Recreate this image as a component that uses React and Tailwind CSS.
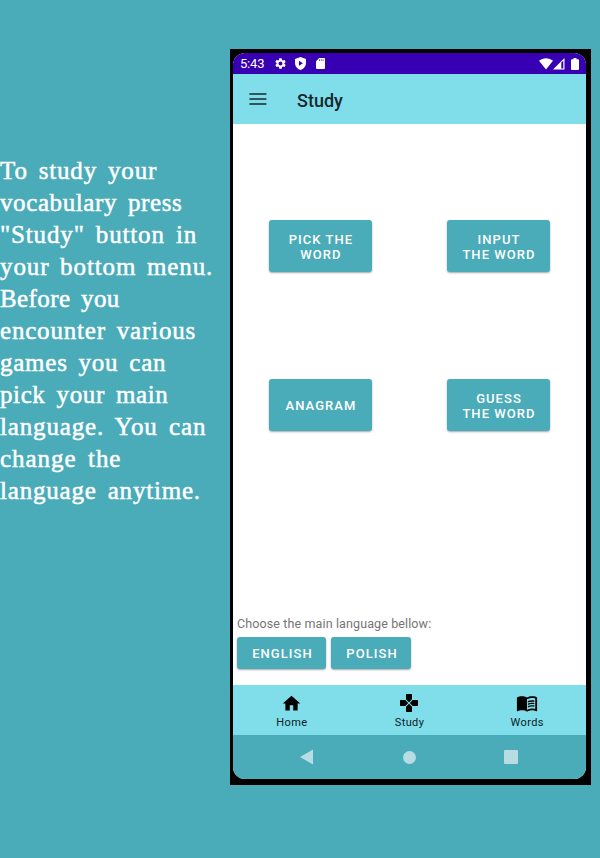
import React from "react";
import { MdSettings, MdHome, MdMenuBook } from "react-icons/md";

const introLines = [
  { text: "To study your", cls: "tracking-[0.85px] [word-spacing:3.8px]" },
  { text: "vocabulary press", cls: "tracking-[0.6px] [word-spacing:4px]" },
  { text: '"Study" button in', cls: "tracking-[0.85px] [word-spacing:4px]" },
  { text: "your bottom menu.", cls: "tracking-[0.9px] [word-spacing:3.500px]" },
  { text: "Before you", cls: "tracking-[0.4px] [word-spacing:4px]" },
  { text: "encounter various", cls: "tracking-[0.8px] [word-spacing:4px]" },
  { text: "games you can", cls: "tracking-[0.75px] [word-spacing:4px]" },
  { text: "pick your main", cls: "tracking-[0.6px] [word-spacing:4.300px]" },
  { text: "language. You can", cls: "tracking-[0.85px] [word-spacing:4.300px]" },
  { text: "change the", cls: "tracking-[0.95px] [word-spacing:4.300px]" },
  { text: "language anytime.", cls: "tracking-[0.8px] [word-spacing:4px]" },
];

function Intro() {
  return (
    <div className="mt-[155px] w-[230px] shrink-0 whitespace-nowrap font-['Liberation_Serif',serif] text-[25px] leading-8 text-white [-webkit-text-stroke:0.5px_white]">
      {introLines.map((l) => (
        <p key={l.text}>
          <span className={l.cls}>{l.text}</span>
        </p>
      ))}
    </div>
  );
}

function GamepadIcon({ className }) {
  return (
    <svg viewBox="0 0 18 18" className={className} fill="currentColor">
      <path d="M6.700 0h4.600a.7.7 0 0 1 .7.7V5.300L9 8.200 6 5.300V.7a.7.7 0 0 1 .7-.7z" />
      <path d="M6.700 18h4.600a.7.7 0 0 0 .7-.7V12.700L9 9.800l-3 2.900v4.600a.7.7 0 0 0 .7.7z" />
      <path d="M0 6.700v4.600a.7.7 0 0 0 .7.7H5.300L8.200 9 5.300 6H.7a.7.7 0 0 0-.7.7z" />
      <path d="M18 6.700v4.600a.7.7 0 0 1-.7.7H12.700L9.800 9l2.900-3h4.600a.7.7 0 0 1 .7.7z" />
    </svg>
  );
}

function StatusBar() {
  return (
    <div className="flex h-[21px] items-center bg-[#3700b3] pl-[7px] pr-[7px] text-white">
      <span className="w-[34px] text-[13px] leading-none tracking-[-0.2px]">5:43</span>
      <MdSettings className="h-[13px] w-[13px]" />
      <svg viewBox="0 0 11 13" className="ml-[8px] h-[13px] w-[11px]" fill="currentColor" fillRule="evenodd">
        <path d="M5.5 0 11 2v4.2c0 3-2.2 5.6-5.5 6.8C2.200 11.800 0 9.200 0 6.200V2zM4 3.700v5l3.900-2.500z" />
      </svg>
      <svg viewBox="0 0 9 11" className="ml-[10px] h-[11px] w-[9px]" fill="currentColor">
        <path d="M3.200 0H8a1 1 0 0 1 1 1v9a1 1 0 0 1-1 1H1a1 1 0 0 1-1-1V3.300z" />
        <path d="M3.500 1.300v1.600M5.300 1.300v1.600M7.100 1.300v1.600" stroke="#3700b3" strokeWidth="0.700" />
      </svg>
      <svg viewBox="0 0 14 12" className="ml-auto h-3 w-[14px]" fill="currentColor">
        <path d="M0 2.800C4-.6 10-.6 14 2.800L7 11.500z" />
      </svg>
      <svg viewBox="0 0 12 12" className="h-3 w-3">
        <path d="M0 11.500 11.500 0v11.500z" fill="currentColor" />
        <path d="M8.300 4.500 10.300 2.700V10.400h-2z" fill="#3700b3" />
      </svg>
      <svg viewBox="0 0 8 12" className="ml-[6px] h-3 w-2" fill="currentColor">
        <path d="M2.500 0h3v1.200H7a1 1 0 0 1 1 1V11a1 1 0 0 1-1 1H1a1 1 0 0 1-1-1V2.200a1 1 0 0 1 1-1h1.500z" />
      </svg>
    </div>
  );
}

function GameButton({ lines }) {
  return (
    <button className="flex h-[52px] w-[103px] flex-col items-center justify-center rounded-[3px] bg-[#4aabb9] pl-px pt-px text-[13px] font-medium leading-[15px] tracking-[1.05px] text-white shadow-[0_1px_2px_rgba(0,0,0,0.35)]">
      {lines.map((l) => (
        <span key={l}>{l}</span>
      ))}
    </button>
  );
}

function LanguageButton({ children, className }) {
  return (
    <button
      className={`h-8 rounded-[3px] bg-[#4aabb9] pl-[2px] text-[13px] font-medium leading-none tracking-[1.05px] text-white shadow-[0_1px_2px_rgba(0,0,0,0.35)] ${className}`}
    >
      {children}
    </button>
  );
}

function Tab({ icon: Icon, label, size }) {
  return (
    <div className="flex flex-1 flex-col items-center pt-[7px]">
      <span className="flex h-[22px] items-center">
        <Icon className={size} />
      </span>
      <span className="mt-[2px] text-[11px] leading-[13px] tracking-[0.4px] text-[#0b2226]">{label}</span>
    </div>
  );
}

function Phone() {
  return (
    <div className="mt-[49px] h-[736px] w-[361px] shrink-0 bg-black pb-[6px] pl-[3px] pr-[5px] pt-[4px]">
      <div className="flex h-[726px] w-[353px] flex-col overflow-hidden rounded-[12px] bg-white font-['Roboto',sans-serif]">
        <StatusBar />
        <header className="flex h-[50px] items-center bg-[#80deea] pl-[16px] text-[#17282b]">
          <svg viewBox="0 0 18 12" className="h-3 w-[18px]" stroke="currentColor" strokeWidth="1.700">
            <path d="M0.400 1h17M0.400 6h17M0.400 11h17" />
          </svg>
          <h1 className="ml-[30px] pt-[3px] text-[18px] font-medium leading-none">Study</h1>
        </header>
        <main className="flex h-[561px] flex-col pt-[96px]">
          <div className="grid grid-cols-[103px_103px] gap-x-[75px] gap-y-[107px] pl-[36px]">
            <GameButton lines={["PICK THE", "WORD"]} />
            <GameButton lines={["INPUT", "THE WORD"]} />
            <GameButton lines={["ANAGRAM"]} />
            <GameButton lines={["GUESS", "THE WORD"]} />
          </div>
          <div className="mt-auto pb-4 pl-1">
            <p className="text-[12.500px] leading-[15px] tracking-[0.12px] text-[#757575]">
              Choose the main language bellow:
            </p>
            <div className="mt-[6px] flex gap-[5px]">
              <LanguageButton className="w-[89px]">ENGLISH</LanguageButton>
              <LanguageButton className="w-[80px]">POLISH</LanguageButton>
            </div>
          </div>
        </main>
        <nav className="flex h-[50px] bg-[#80deea] text-black">
          <Tab icon={MdHome} label="Home" size="h-[21px] w-[21px]" />
          <Tab icon={GamepadIcon} label="Study" size="mr-px h-[18px] w-[18px]" />
          <Tab icon={MdMenuBook} label="Words" size="h-[22px] w-[22px]" />
        </nav>
        <div className="flex h-11 items-center bg-[#4aabb9] pl-[67px] text-[#b7dde3]">
          <svg viewBox="0 0 13 16" className="h-4 w-[13px]" fill="currentColor">
            <path d="M0 8 13 0.500v15z" />
          </svg>
          <span className="ml-[89.5px] h-[13px] w-[13px] rounded-full bg-[#b7dde3]" />
          <span className="ml-[88.500px] h-[14px] w-[14px] rounded-[1px] bg-[#b7dde3]" />
        </div>
      </div>
    </div>
  );
}

export default function App() {
  return (
    <div className="flex h-[858px] w-[600px] items-start overflow-hidden bg-[#4aabb9]">
      <Intro />
      <Phone />
    </div>
  );
}
